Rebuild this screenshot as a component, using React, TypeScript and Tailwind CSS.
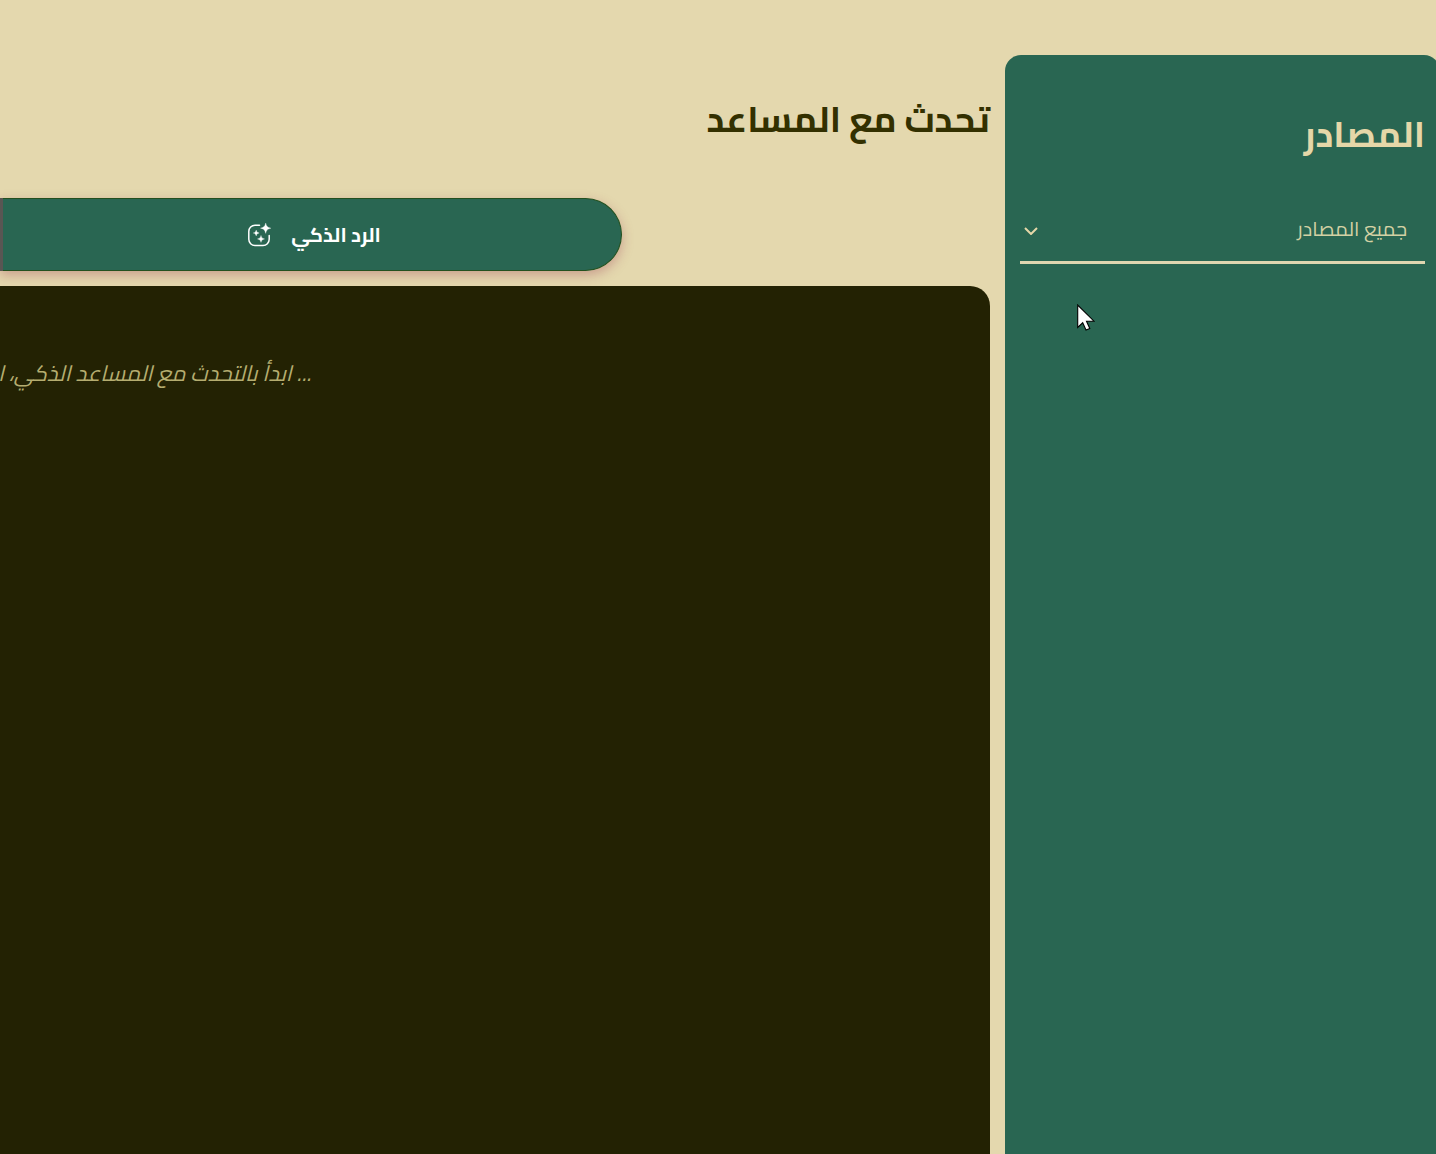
function SparkleIcon() {
  return (
    <svg viewBox="0 0 24 24" className="h-6 w-6 shrink-0" aria-hidden="true">
      <path
        d="M12.500 2.200H8A6.200 6.200 0 0 0 1.800 8.400v7.900A6.200 6.200 0 0 0 8 22.500h8a6.200 6.200 0 0 0 6.200-6.200V12.500"
        fill="none"
        stroke="currentColor"
        strokeWidth="1.5"
        strokeLinecap="round"
      />
      <path
        d="M18.700 0c.9 3.500 1.700 4.300 5.200 5.200-3.500.9-4.300 1.700-5.200 5.200-.9-3.500-1.700-4.300-5.200-5.200 3.500-.9 4.300-1.700 5.200-5.200zM9.200 7c.5 2 1 2.500 3 3-2 .5-2.500 1-3 3-.5-2-1-2.500-3-3 2-.5 2.500-1 3-3zM14 12.400c.6 2.300 1.200 2.900 3.500 3.500-2.300.6-2.900 1.200-3.500 3.500-.6-2.300-1.200-2.900-3.500-3.500 2.300-.6 2.900-1.200 3.500-3.500z"
        fill="currentColor"
        stroke="currentColor"
        strokeWidth="0.3"
      />
    </svg>
  );
}

function Pointer() {
  return (
    <svg
      viewBox="0 0 18 27"
      className="pointer-events-none absolute top-[304px] left-[1077px] h-[27px] w-[18px]"
      aria-hidden="true"
    >
      <path
        d="M.7 1v22.500l5-4.700 3.300 7.200 3.800-1.500-3.300-7.300h7.500z"
        fill="#fff"
        stroke="#000"
        strokeWidth="1.100"
      />
    </svg>
  );
}

function Sources() {
  return (
    <aside className="mt-[55px] -mr-1 flex w-[435px] shrink-0 flex-col rounded-t-2xl bg-[#296652] px-[15px] text-[#e5d7a8]">
      <h2 className="mt-[49px] text-4xl leading-[60px] font-bold">المصادر</h2>
      <div className="relative mt-9">
        <select
          aria-label="المصادر"
          className="h-16 w-full appearance-none border-b-[3px] border-[#dfd6b0] bg-transparent pr-[18px] pb-1 pl-8 text-xl text-[#d3d1a4] outline-none"
        >
          <option>جميع المصادر</option>
        </select>
        <svg
          viewBox="0 0 14 8"
          className="pointer-events-none absolute top-[27px] left-1 h-2 w-3.5"
          fill="none"
          stroke="currentColor"
          strokeWidth="2"
          aria-hidden="true"
        >
          <path d="M1 1l6 6 6-6" />
        </svg>
      </div>
    </aside>
  );
}

function Chat() {
  return (
    <main className="flex min-w-0 flex-1 flex-col">
      <h1 className="mt-[89px] text-4xl leading-[60px] font-bold text-[#333000]">
        تحدث مع المساعد
      </h1>
      <div className="mt-[49px] mr-[368px] flex h-[73px] shrink-0 rounded-r-full shadow-[0_4px_12px_rgba(150,50,80,0.35)]">
        <button className="flex flex-1 items-center justify-center gap-5 rounded-r-full border-y border-r border-[#23501f] bg-[#296652] pl-1 text-xl font-bold text-white">
          <span>الرد الذكي</span>
          <SparkleIcon />
        </button>
        <button aria-label="وضع آخر" className="w-[3px] bg-[#595653]" />
      </div>
      <section className="mt-[15px] flex-1 overflow-hidden rounded-tr-[20px] bg-[#232203]">
        <p className="mt-[69px] mr-[679px] text-[22px] leading-9 whitespace-nowrap text-[#b5ad70] italic">
          ... ابدأ بالتحدث مع المساعد الذكي، اسأل
        </p>
      </section>
    </main>
  );
}

export default function App() {
  return (
    <div
      dir="rtl"
      className="relative flex min-h-screen gap-[15px] overflow-hidden bg-[#e4d8ae] font-['Cairo','DejaVu_Sans',sans-serif]"
    >
      <Sources />
      <Chat />
      <Pointer />
    </div>
  );
}
